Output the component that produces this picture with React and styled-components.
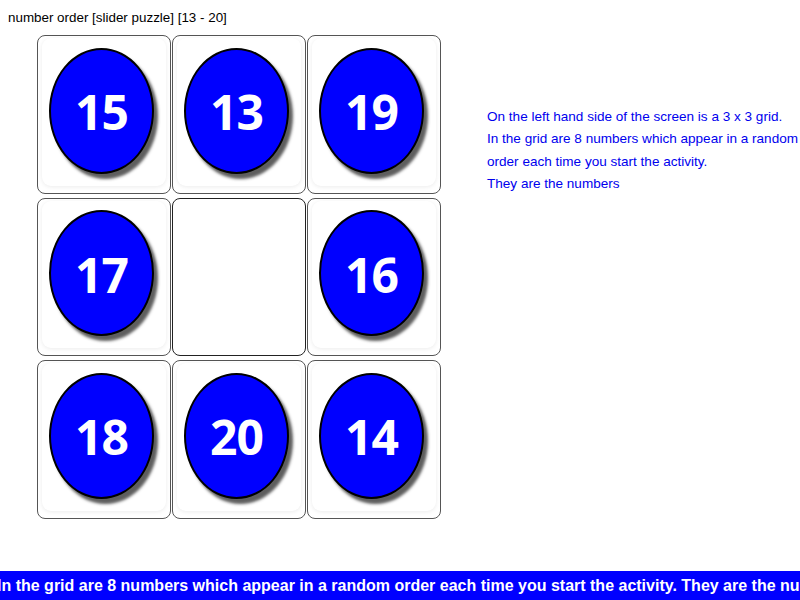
import React from 'react'
import styled, { createGlobalStyle } from 'styled-components'

const GlobalStyle = createGlobalStyle`
  html, body {
    margin: 0;
    padding: 0;
    background: #fff;
    overflow: hidden;
  }
`

const Page = styled.div`
  display: flex;
  flex-direction: column;
  width: 800px;
  height: 600px;
  font-family: "Comic Sans MS", "Liberation Sans", sans-serif;
`

const Title = styled.div`
  padding: 8px 0 0 8px;
  height: 19px;
  font-size: 13.4px;
  line-height: 19px;
  color: #000;
`

const Main = styled.div`
  flex: 1;
  display: flex;
  align-items: flex-start;
`

const Grid = styled.div`
  display: grid;
  grid-template-columns: repeat(3, 134px);
  grid-auto-rows: 158.5px;
  column-gap: 1px;
  row-gap: 4px;
  margin: 8px 0 0 37px;
`

const Tile = styled.div`
  box-sizing: border-box;
  display: flex;
  align-items: center;
  justify-content: center;
  border: 1px solid ${(p) => (p.$empty ? '#222' : '#555')};
  border-radius: 8px;
  background: #fff;
  padding: 2px 4px 7px 4px;
`

const Card = styled.div`
  box-sizing: border-box;
  width: 100%;
  height: 100%;
  display: flex;
  align-items: center;
  justify-content: center;
  border-radius: 9px;
  background: #fff;
  box-shadow: 0 1px 4px rgba(0, 0, 0, 0.08);
  padding: 0 5px 2px 0;
`

const Ball = styled.div`
  box-sizing: border-box;
  width: 105px;
  height: 126px;
  border-radius: 50%;
  background: #0000ff;
  border: 2px solid #000;
  box-shadow: 4px 5px 3px rgba(40, 40, 40, 0.75);
  display: flex;
  align-items: center;
  justify-content: center;
  color: #fff;
  font-family: "Open Sans", "Liberation Sans", sans-serif;
  font-weight: 700;
  font-size: 48px;
  letter-spacing: -1px;
  padding-top: 2px;
`

const Info = styled.div`
  margin: 79px 0 0 46px;
  width: 312px;
  color: #0000ee;
  font-size: 13.55px;
  line-height: 22.4px;
  white-space: nowrap;
`

const Ticker = styled.div`
  height: 29px;
  background: #0000ff;
  color: #fff;
  font-weight: bold;
  font-size: 16px;
  line-height: 29px;
  white-space: nowrap;
  overflow: hidden;
  text-indent: -3px;
`

const tiles = [15, 13, 19, 17, null, 16, 18, 20, 14]

const info = [
  'On the left hand side of the screen is a 3 x 3 grid.',
  'In the grid are 8 numbers which appear in a random',
  'order each time you start the activity.',
  'They are the numbers',
]

export default function App() {
  return (
    <Page>
      <GlobalStyle />
      <Title>number order [slider puzzle] [13 - 20]</Title>
      <Main>
        <Grid>
          {tiles.map((n, i) =>
            n === null ? (
              <Tile key={i} $empty />
            ) : (
              <Tile key={i}>
                <Card>
                  <Ball>{n}</Ball>
                </Card>
              </Tile>
            )
          )}
        </Grid>
        <Info>
          {info.map((line) => (
            <div key={line}>{line}</div>
          ))}
        </Info>
      </Main>
      <Ticker>
        In the grid are 8 numbers which appear in a random order each time you start the activity. They are the numbers
      </Ticker>
    </Page>
  )
}
